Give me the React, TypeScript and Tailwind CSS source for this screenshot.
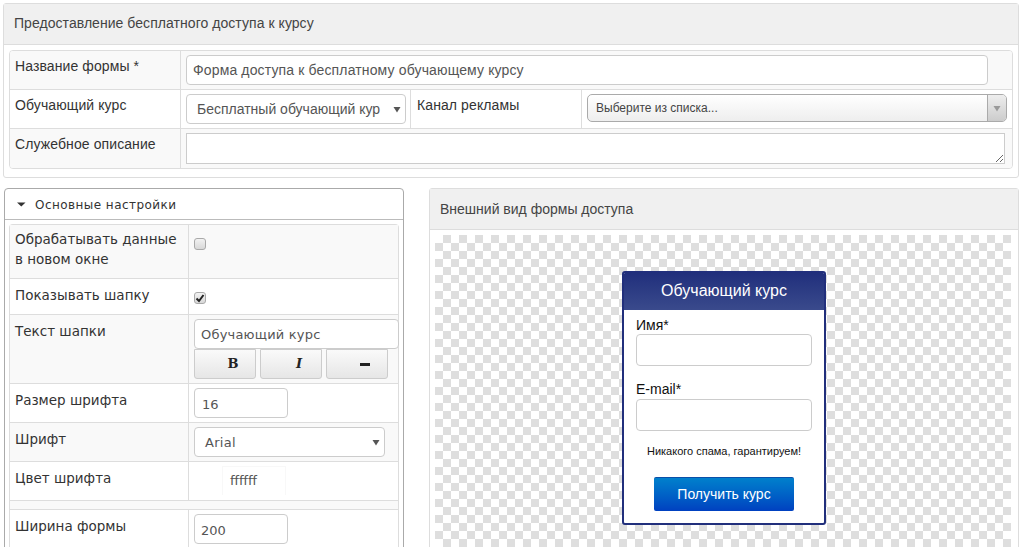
import React from "react";

const sans = "font-['Liberation_Sans',Arial,sans-serif]";
const dv = "font-['DejaVu_Sans',Verdana,sans-serif]";

function TopLabel({ children, w }: { children: React.ReactNode; w: string }) {
  return <div className={`${w} shrink-0 border-r border-[#ddd] pl-[5px] pt-[5px] text-[14px] leading-[20px] tracking-[0.1px] text-[#333]`}>{children}</div>;
}

function Arrow({ c = "#555" }: { c?: string }) {
  return (
    <svg width="8" height="7" viewBox="0 0 8 7" className="shrink-0">
      <path d="M0.5 1 H7.5 L4 6.5 Z" fill={c} />
    </svg>
  );
}

function Row({ label, h, bg, pt = "pt-[6px]", children }: { label: React.ReactNode; h: string; bg?: string; pt?: string; children?: React.ReactNode }) {
  return (
    <div className={`flex ${h} ${bg ?? ""} border-b border-[#ddd]`}>
      <div className={`w-[179px] shrink-0 border-r border-[#ddd] pl-[5px] ${pt} text-[13.5px] leading-[20px] text-[#333]`}>{label}</div>
      <div className="flex-1 min-w-0 pl-[5px] pt-[4px]">{children}</div>
    </div>
  );
}

function Check({ checked }: { checked?: boolean }) {
  return (
    <div className="relative mt-[9px] h-[12px] w-[12px] rounded-[3px] border border-[#a9a9a9] bg-gradient-to-b from-[#f2f2f2] to-[#d8d8d8]">
      {checked && (
        <svg viewBox="0 0 12 12" className="absolute left-[-1px] top-[-1px] h-[12px] w-[12px]">
          <path d="M2.5 6.5 L5 9 L9.5 3" fill="none" stroke="#222" strokeWidth="2" />
        </svg>
      )}
    </div>
  );
}

function Btn({ children, cls }: { children: React.ReactNode; cls: string }) {
  return (
    <div className={`flex h-[30px] w-[62px] items-center justify-center rounded-b-[3px] border border-[#ccc] bg-gradient-to-b from-[#fafafa] to-[#e6e6e6] pl-[16px] text-[#222] ${cls}`}>
      {children}
    </div>
  );
}

const inp = "block rounded-[4px] border border-[#ccc] bg-white text-[#555] outline-none";

export default function App() {
  return (
    <div className={`${sans} h-screen overflow-hidden bg-white`}>
      <div className="ml-[3px] mt-[3px] h-[175px] w-[1016px] rounded-[3px] border border-[#ddd] bg-white">
        <div className="flex h-[41px] items-center border-b border-[#ddd] bg-[#f0f0f0] pl-[10px] pb-[1px] text-[14px] tracking-[0.05px] text-[#444]">
          Предоставление бесплатного доступа к курсу
        </div>
        <div className="ml-[5px] mt-[5px] h-[119px] w-[1004px] overflow-hidden rounded-[4px] border border-[#ddd]">
          <div className="flex h-[39px] border-b border-[#ddd] bg-[#f9f9f9]">
            <TopLabel w="w-[171px]">Название формы *</TopLabel>
            <div className="pl-[5px] pt-[4px]">
              <input readOnly value="Форма доступа к бесплатному обучающему курсу" className={`${inp} h-[30px] w-[802px] pl-[6px] text-[14px] tracking-[0.14px]`} />
            </div>
          </div>
          <div className="flex h-[39px] border-b border-[#ddd]">
            <TopLabel w="w-[171px]">Обучающий курс</TopLabel>
            <div className="w-[230px] shrink-0 border-r border-[#ddd] pl-[5px] pt-[4px]">
              <div className={`${inp} flex h-[30px] w-[220px] items-center justify-between pl-[10px] pr-[4px] text-[14px]`}>
                <span className="whitespace-nowrap">Бесплатный обучающий кур</span>
                <Arrow />
              </div>
            </div>
            <div className="w-[171px] shrink-0 border-r border-[#ddd] pl-[6px] pt-[5px] text-[14px] leading-[20px] tracking-[0.1px] text-[#333]">Канал рекламы</div>
            <div className="flex-1 pl-[5px] pt-[4px]">
              <div className="flex h-[28px] w-[420px] items-stretch overflow-hidden rounded-[5px] border border-[#aaa] bg-gradient-to-b from-white to-[#eee]">
                <span className="flex-1 pl-[8px] text-[12px] leading-[26px] text-[#444]">Выберите из списка...</span>
                <span className="flex w-[19px] items-center justify-center border-l border-[#aaa] bg-gradient-to-b from-[#eee] to-[#ccc]">
                  <Arrow c="#999" />
                </span>
              </div>
            </div>
          </div>
          <div className="flex h-[39px] bg-[#f9f9f9]">
            <TopLabel w="w-[171px]">Служебное описание</TopLabel>
            <div className="pl-[5px] pt-[4px]">
              <textarea readOnly className="block h-[31px] w-[819px] border border-[#ccc] bg-white outline-none" />
            </div>
          </div>
        </div>
      </div>

      <div className="mt-[10px] flex items-start">
        <div className={`${dv} ml-[4px] h-[360px] w-[400px] rounded-t-[4px] border border-[#aaa] bg-white`}>
          <div className="flex h-[31px] items-center border-b border-[#bbb] pl-[12px] pt-[1px] text-[12px] tracking-[0.45px] text-[#333]">
            <svg width="9" height="5" viewBox="0 0 9 5" className="shrink-0"><path d="M0 0.5 H8.5 L4.25 4.5 Z" fill="#333" /></svg>
            <span className="ml-[9px]">Основные настройки</span>
          </div>
          <div className="ml-[4px] mt-[4px] w-[390px] rounded-t-[4px] border-x border-t border-[#ddd]">
            <Row h="h-[54px]" bg="bg-[#f9f9f9]" pt="pt-[4px]" label={<>Обрабатывать данные<br />в новом окне</>}>
              <Check />
            </Row>
            <Row h="h-[36px]" label="Показывать шапку">
              <Check checked />
            </Row>
            <Row h="h-[69px]" bg="bg-[#f9f9f9]" label="Текст шапки">
              <input readOnly value="Обучающий курс" className={`${inp} h-[30px] w-[205px] pl-[6px] text-[13px] tracking-[0.2px] text-[#6b4a3a]`} />
              <div className="flex gap-[4px]">
                <Btn cls="font-['DejaVu_Serif',serif] text-[13px] font-bold">B</Btn>
                <Btn cls="font-['DejaVu_Serif',serif] text-[13px] font-bold italic">I</Btn>
                <Btn cls=""><span className="h-[3px] w-[10px] bg-[#222]" /></Btn>
              </div>
            </Row>
            <Row h="h-[39px]" label="Размер шрифта">
              <input readOnly value="16" className={`${inp} h-[30px] w-[94px] pl-[7px] pt-[2px] text-[13px]`} />
            </Row>
            <Row h="h-[39px]" bg="bg-[#f9f9f9]" label="Шрифт">
              <div className={`${inp} flex h-[30px] w-[191px] items-center justify-between pl-[10px] pr-[4px] pt-[1px] text-[13px]`}>
                <span className="tracking-[0.3px]">Arial</span>
                <Arrow />
              </div>
            </Row>
            <Row h="h-[39px]" label="Цвет шрифта">
              <div className="ml-[28px] h-[29px] w-[64px] border-x border-t border-[#f8f8f8] pl-[7px] text-[13px] leading-[28px] text-[#555]">ffffff</div>
            </Row>
            <div className="h-[9px] border-b border-[#ddd] bg-[#f9f9f9]" />
            <Row h="h-[45px]" label="Ширина формы">
              <input readOnly value="200" className={`${inp} h-[30px] w-[94px] pl-[6px] pt-[2px] text-[13px]`} />
            </Row>
          </div>
        </div>

        <div className="ml-[25px] h-[360px] w-[590px] rounded-t-[3px] border border-[#ddd] bg-white">
          <div className="flex h-[41px] items-center border-b border-[#ddd] bg-[#f0f0f0] pl-[10px] text-[14px] text-[#444]">
            Внешний вид формы доступа
          </div>
          <div className="ml-[5px] mt-[5px] flex h-[320px] w-[576px] justify-center bg-[conic-gradient(#dedede_25%,#fff_0_50%,#dedede_0_75%,#fff_0)] bg-[length:16px_16px] pl-[2px] pt-[36px]">
            <div className="h-[254px] w-[204px] overflow-hidden rounded-[3px] border-2 border-[#212f7c] bg-white">
              <div className="flex h-[37px] items-center justify-center bg-gradient-to-b from-[#212f7c] to-[#3a4a8c] pb-[1px] text-[16px] text-white">
                Обучающий курс
              </div>
              <div className="pl-[12px] pt-[7px] text-[14px] leading-[16px] text-[#111]">
                <div>Имя*</div>
                <input readOnly className={`${inp} mt-[1px] h-[32px] w-[176px]`} />
                <div className="mt-[15px]">E-mail*</div>
                <input readOnly className={`${inp} mt-[2px] h-[32px] w-[176px]`} />
              </div>
              <div className="mt-[13px] text-center text-[11px] leading-[14px] text-[#111]">Никакого спама, гарантируем!</div>
              <div className="mx-auto mt-[19px] flex h-[34px] w-[140px] items-center justify-center rounded-[2px] border-t border-[#0a4fa8] bg-gradient-to-b from-[#0080cc] to-[#0040c0] text-[14px] text-white">
                Получить курс
              </div>
            </div>
          </div>
        </div>
      </div>
    </div>
  );
}
